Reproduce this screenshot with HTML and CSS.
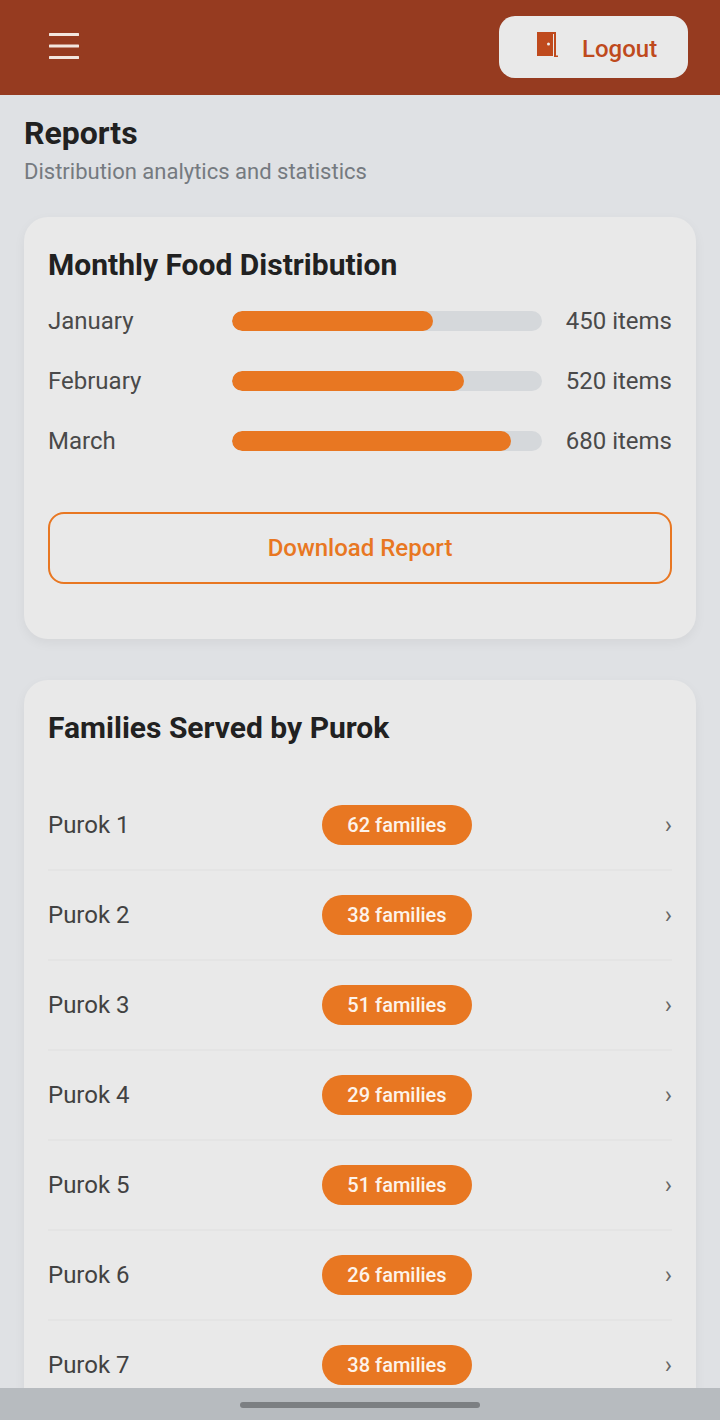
FILE: index.html
```html
<!DOCTYPE html>
<html lang="en">
<head>
<meta charset="utf-8">
<title>Reports</title>
<link rel="stylesheet" href="styles.css">
</head>
<body>
<header class="topbar">
  <button class="menu" aria-label="Menu">
    <svg width="30" height="30" viewBox="0 0 30 30"><path d="M1 3.5H29M1 15H29M1 26.5H29" stroke="#f3e6df" stroke-width="3" stroke-linecap="round" fill="none"/></svg>
  </button>
  <button class="logout">
    <svg class="door" width="22" height="26" viewBox="0 0 22 26"><path d="M1 1H17V25H1Z" fill="#bf4a1d"/><path d="M17 1H20V24.5H22V26H18V3H17Z" fill="#bf4a1d"/><circle cx="12.5" cy="13" r="1.5" fill="#eee"/></svg>
    <span>Logout</span>
  </button>
</header>
<main class="content">
  <h1 class="title">Reports</h1>
  <p class="subtitle">Distribution analytics and statistics</p>
  <section class="card card-monthly">
    <h2 class="card-title">Monthly Food Distribution</h2>
    <div class="bar-row"><span class="month">January</span><div class="track"><div class="fill" style="width:65%"></div></div><span class="count">450 items</span></div>
    <div class="bar-row"><span class="month">February</span><div class="track"><div class="fill" style="width:75%"></div></div><span class="count">520 items</span></div>
    <div class="bar-row"><span class="month">March</span><div class="track"><div class="fill" style="width:90%"></div></div><span class="count">680 items</span></div>
    <button class="download">Download Report</button>
  </section>
  <section class="card">
    <h2 class="card-title purok-title">Families Served by Purok</h2>
    <div class="purok-row"><span class="purok">Purok 1</span><span class="pill">62 families</span><span class="chev">›</span></div>
    <div class="purok-row"><span class="purok">Purok 2</span><span class="pill">38 families</span><span class="chev">›</span></div>
    <div class="purok-row"><span class="purok">Purok 3</span><span class="pill">51 families</span><span class="chev">›</span></div>
    <div class="purok-row"><span class="purok">Purok 4</span><span class="pill">29 families</span><span class="chev">›</span></div>
    <div class="purok-row"><span class="purok">Purok 5</span><span class="pill">51 families</span><span class="chev">›</span></div>
    <div class="purok-row"><span class="purok">Purok 6</span><span class="pill">26 families</span><span class="chev">›</span></div>
    <div class="purok-row"><span class="purok">Purok 7</span><span class="pill">38 families</span><span class="chev">›</span></div>
  </section>
</main>
<footer class="navbar"><div class="handle"></div></footer>
</body>
</html>
```
FILE: styles.css
```css
* { box-sizing: border-box; }
html, body { height: 100%; margin: 0; }
body {
  display: flex;
  flex-direction: column;
  height: 1420px;
  overflow: hidden;
  background: #dfe1e4;
  font-family: Roboto, "Noto Sans", sans-serif;
}
button { font-family: inherit; border: 0; background: none; padding: 0; }
.topbar {
  flex: none;
  height: 95px;
  background: #963b20;
  display: flex;
  align-items: center;
  justify-content: space-between;
  padding: 0 32px 0 49px;
}
.menu { width: 30px; height: 30px; display: flex; margin-bottom: 3px; }
.logout {
  width: 189px;
  height: 62px;
  margin-bottom: 1px;
  border-radius: 16px;
  background: #e9e9e9;
  color: #bf4a1d;
  font-size: 24px;
  font-weight: 500;
  display: flex;
  align-items: center;
  gap: 24px;
  padding: 0 0 0 37px;
}
.logout span { margin-top: 3px; }
.door { margin-bottom: 6px; }
.content {
  flex: 1;
  min-height: 0;
  overflow: hidden;
  padding: 18px 24px 0;
}
.title { margin: 0; font-size: 32px; line-height: 40px; font-weight: 700; color: #212121; }
.subtitle { margin: 3px 0 0; font-size: 22px; line-height: 32px; color: #757a80; }
.card {
  background: #e9e9e9;
  border-radius: 24px;
  padding: 24px;
  box-shadow: 0 4px 12px rgba(0,0,0,.05);
  margin-bottom: 41px;
}
.card-monthly { margin-top: 29px; height: 422px; }
.card-title { margin: 0 0 16px; font-size: 30px; line-height: 48px; font-weight: 700; color: #212121; }
.bar-row { display: flex; align-items: center; height: 60px; font-size: 24px; color: #4a4a4a; }
.month { width: 184px; flex: none; }
.track { flex: 1; height: 20px; border-radius: 10px; background: #d5d8db; overflow: hidden; }
.fill { height: 100%; border-radius: 10px; background: #e87722; }
.count { flex: none; margin-left: 24px; }
.card-title + .bar-row { margin-top: -14px; }
.download {
  display: block;
  width: 100%;
  height: 72px;
  margin-top: 41px;
  border: 2px solid #e87722;
  border-radius: 16px;
  color: #e87722;
  font-size: 24px;
  font-weight: 500;
}
.purok-title { margin-bottom: 29px; }
.purok-row {
  display: flex;
  align-items: center;
  height: 90px;
  border-bottom: 2px solid #e4e4e4;
  font-size: 24px;
  color: #424242;
}
.purok { width: 274px; flex: none; }
.pill {
  width: 150px;
  height: 40px;
  border-radius: 20px;
  background: #e87722;
  color: #fdf3ea;
  font-size: 20px;
  font-weight: 500;
  display: flex;
  align-items: center;
  justify-content: center;
}
.chev { margin-left: auto; font-size: 24px; color: #666; }
.navbar {
  flex: none;
  height: 32px;
  background: #b7bbbf;
  display: flex;
  justify-content: center;
  padding-top: 14px;
}
.handle { width: 240px; height: 6px; border-radius: 3px; background: #7c7f82; }
```
